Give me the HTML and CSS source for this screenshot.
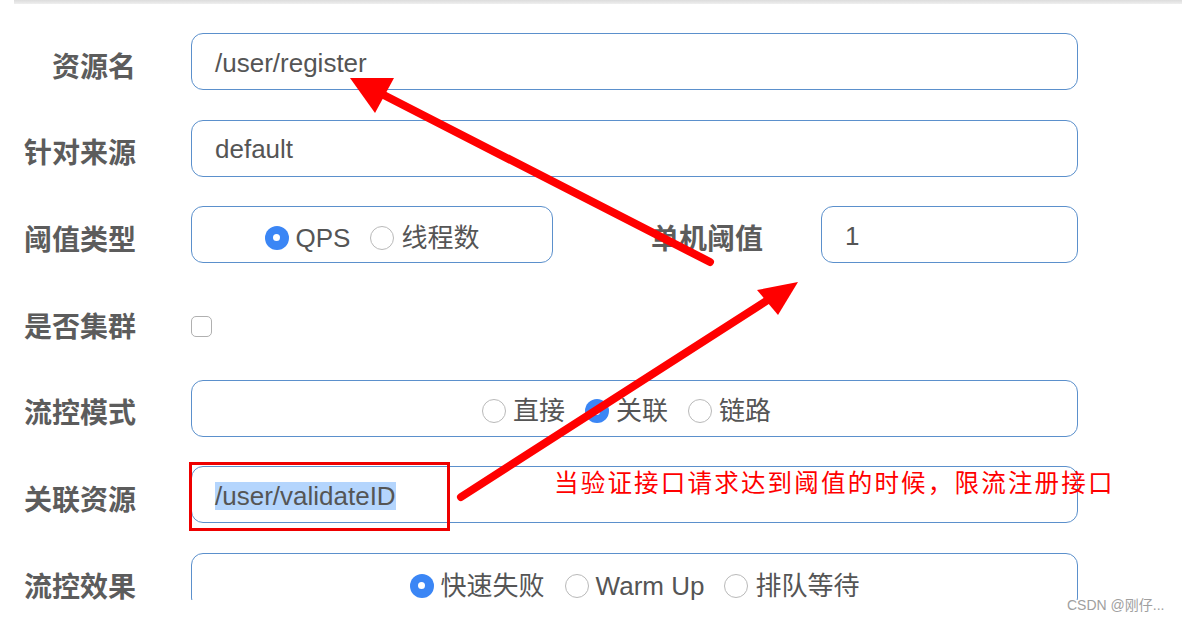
FILE: index.html
```html
<!DOCTYPE html>
<html lang="zh">
<head>
<meta charset="utf-8">
<title>流控规则</title>
<link rel="stylesheet" href="styles.css">
</head>
<body>
<div class="page">
  <div class="topline"></div>
  <div class="form">
    <div class="row">
      <div class="label">资源名</div>
      <div class="input">/user/register</div>
    </div>
    <div class="row">
      <div class="label">针对来源</div>
      <div class="input">default</div>
    </div>
    <div class="row">
      <div class="label">阈值类型</div>
      <div class="split">
        <div class="input radios">
          <span class="radio on"></span><span class="rtext">QPS</span>
          <span class="radio"></span><span class="rtext">线程数</span>
        </div>
        <div class="label sub">单机阈值</div>
        <div class="input">1</div>
      </div>
    </div>
    <div class="row">
      <div class="label">是否集群</div>
      <div class="check-cell"><span class="checkbox"></span></div>
    </div>
    <div class="row">
      <div class="label">流控模式</div>
      <div class="input radios mode">
        <span class="radio"></span><span class="rtext">直接</span>
        <span class="radio on"></span><span class="rtext">关联</span>
        <span class="radio"></span><span class="rtext">链路</span>
      </div>
    </div>
    <div class="row">
      <div class="label">关联资源</div>
      <div class="input"><span class="selected">/user/validateID</span></div>
    </div>
    <div class="row">
      <div class="label">流控效果</div>
      <div class="input radios effect">
        <span class="radio on"></span><span class="rtext">快速失败</span>
        <span class="radio"></span><span class="rtext">Warm Up</span>
        <span class="radio"></span><span class="rtext">排队等待</span>
      </div>
    </div>
  </div>

  <div class="mark-box"></div>
  <div class="note">当验证接口请求达到阈值的时候，限流注册接口</div>
  <svg class="arrows" width="1182" height="600" viewBox="0 0 1182 600">
    <line x1="710" y1="262" x2="372" y2="89" stroke="#ff0000" stroke-width="8" stroke-linecap="round"/>
    <polygon points="350,78 394,78 375,113" fill="#ff0000"/>
    <line x1="461" y1="497" x2="774" y2="296" stroke="#ff0000" stroke-width="8" stroke-linecap="round"/>
    <polygon points="798,282 757,290 778,315" fill="#ff0000"/>
  </svg>
</div>
<div class="watermark">CSDN @刚仔...</div>
</body>
</html>
```

FILE: styles.css
```css
html, body {
  margin: 0;
  padding: 0;
  background: #ffffff;
}

body {
  width: 1182px;
  height: 619px;
  position: relative;
  font-family: "Liberation Sans", "Noto Sans CJK SC", sans-serif;
  color: #555555;
}

.page {
  position: relative;
  width: 1182px;
  height: 600px;
  overflow: hidden;
}

.topline {
  margin-left: 14px;
  height: 4px;
  background: linear-gradient(#dcdcdc, #efefef);
}

.form {
  width: 1078px;
  margin-top: 29px;
  display: flex;
  flex-direction: column;
  gap: 29.7px;
}

.row {
  display: grid;
  grid-template-columns: 136px 1fr;
  column-gap: 55px;
  height: 57px;
  align-items: center;
}

.label {
  text-align: right;
  font-family: "Noto Sans CJK SC", sans-serif;
  font-weight: 700;
  font-size: 28px;
  color: #5c5c5c;
  line-height: 30px;
  padding-top: 6px;
}

.input {
  box-sizing: border-box;
  height: 57px;
  border: 1.6px solid #5b90cc;
  border-radius: 12px;
  padding-left: 23px;
  padding-top: 3px;
  display: flex;
  align-items: center;
  font-size: 26px;
  color: #555555;
  background: #fff;
}

.split {
  display: grid;
  grid-template-columns: 362px 1fr 257px;
  column-gap: 58px;
  align-items: center;
}

.label.sub {
  padding-top: 4px;
}

.radios {
  justify-content: center;
  padding-left: 0;
  padding-top: 6px;
  font-family: "Liberation Sans", "Noto Sans CJK SC", sans-serif;
}

.radios.mode {
  padding-right: 16px;
}

.radios.effect {
  padding-top: 8px;
}

.radio {
  box-sizing: border-box;
  width: 24px;
  height: 24px;
  border-radius: 50%;
  border: 1.6px solid #b9b9b9;
  background: #fff;
  flex: none;
  position: relative;
  margin-left: 20px;
  margin-right: 7px;
}

.radio:first-child {
  margin-left: 0;
}

.radio.on {
  border: none;
  background: #3b86f5;
}

.radio.on::after {
  content: "";
  position: absolute;
  left: 8.5px;
  top: 8.5px;
  width: 7px;
  height: 7px;
  border-radius: 50%;
  background: #fff;
}

.rtext {
  font-size: 26px;
  line-height: 30px;
  color: #555555;
}

.check-cell {
  display: flex;
  align-items: center;
  padding-top: 10px;
}

.checkbox {
  box-sizing: border-box;
  width: 21px;
  height: 21px;
  border: 1.6px solid #b0b0b0;
  border-radius: 5px;
}

.selected {
  background: #b4d5fd;
  line-height: 27px;
  display: inline-block;
  padding-top: 1px;
}

.mark-box {
  position: absolute;
  left: 189px;
  top: 462px;
  width: 261px;
  height: 69px;
  box-sizing: border-box;
  border: 3.5px solid #ee0000;
}

.note {
  position: absolute;
  left: 554px;
  top: 466px;
  font-family: "Noto Sans CJK SC", sans-serif;
  font-size: 24.5px;
  letter-spacing: 2.2px;
  line-height: 32px;
  color: #ff0000;
  white-space: nowrap;
}

.arrows {
  position: absolute;
  left: 0;
  top: 0;
}

.watermark {
  position: absolute;
  left: 1067px;
  top: 594px;
  font-family: "Liberation Sans", "Noto Sans CJK SC", sans-serif;
  font-size: 14px;
  color: #a0a0a0;
  white-space: nowrap;
}
```
